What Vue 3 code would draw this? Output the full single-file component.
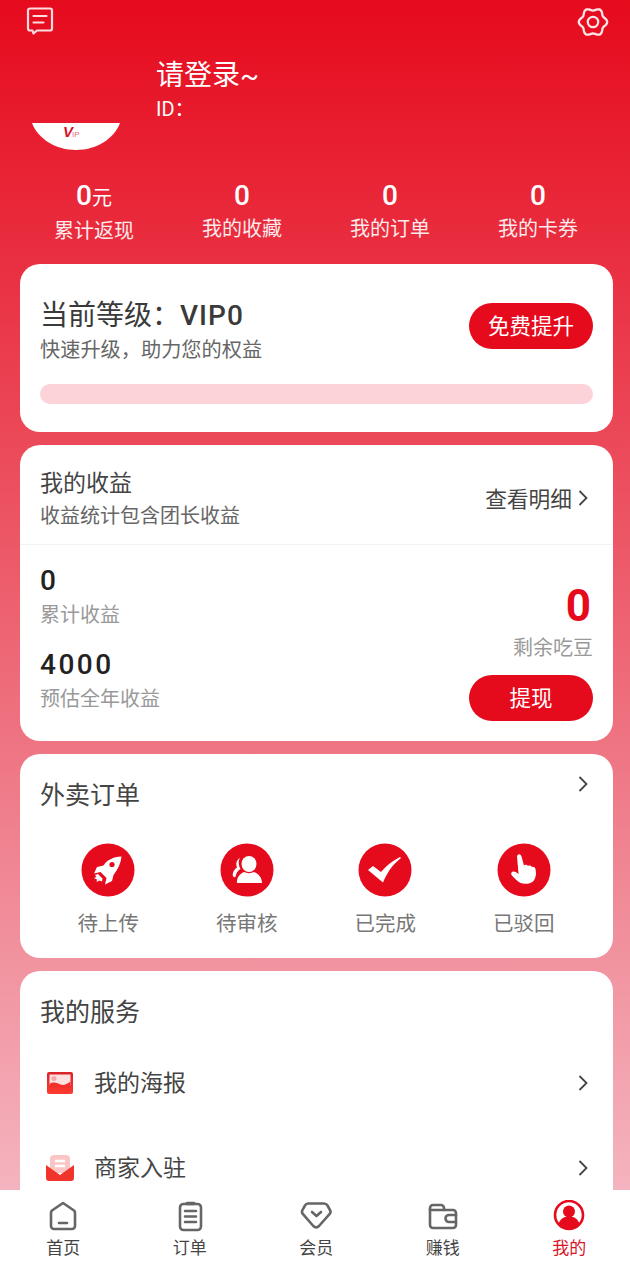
<script setup>
const stats = [
  { num: "0", unit: "元", label: "累计返现" },
  { num: "0", unit: "", label: "我的收藏" },
  { num: "0", unit: "", label: "我的订单" },
  { num: "0", unit: "", label: "我的卡券" },
];
const orders = [
  { key: "rocket", label: "待上传" },
  { key: "user", label: "待审核" },
  { key: "check", label: "已完成" },
  { key: "hand", label: "已驳回" },
];
const tabs = [
  { key: "home", label: "首页" },
  { key: "order", label: "订单" },
  { key: "vip", label: "会员" },
  { key: "wallet", label: "赚钱" },
  { key: "mine", label: "我的" },
];

// 设置图标的花瓣轮廓
function gearPath() {
  const pts = [];
  for (let i = 0; i < 72; i++) {
    const a = (i / 72) * Math.PI * 2;
    const r = 12.8 + 1.4 * Math.cos(6 * a);
    pts.push((16 + r * Math.cos(a)).toFixed(2) + " " + (16 + r * Math.sin(a)).toFixed(2));
  }
  return "M" + pts.join("L") + "z";
}
const gear = gearPath();
</script>

<template>
  <div class="page">
    <div class="topbar">
      <svg width="30" height="30" viewBox="0 0 30 30" fill="none" stroke="#fbdde0" stroke-width="2.200">
        <path d="M5 2.500h20a2 2 0 0 1 2 2v18a2 2 0 0 1-2 2H12l-3.500 3-1-3H5a2 2 0 0 1-2-2v-18a2 2 0 0 1 2-2z" stroke-linejoin="round" />
        <path d="M8.500 10h13M8.500 16.500h10" stroke-linecap="round" />
      </svg>
      <svg width="32" height="32" viewBox="0 0 32 32" fill="none" stroke="#fde6e8" stroke-width="2.300">
        <path :d="gear" stroke-linejoin="round" />
        <circle cx="16" cy="16" r="5.200" />
      </svg>
    </div>

    <div class="profile">
      <div class="avatar">
        <svg width="90" height="29" viewBox="0 0 90 29">
          <path d="M0 1h88C82 17 64 28 44 28S6 17 0 1z" fill="#fff" />
          <text x="31" y="15" class="logo-v">V</text>
          <text x="40" y="15" class="logo-ip">IP</text>
        </svg>
      </div>
      <div class="who">
        <div class="name">请登录~</div>
        <div class="uid">ID：</div>
      </div>
    </div>

    <div class="stats">
      <div v-for="s in stats" :key="s.label" class="stat">
        <div class="stat-num">{{ s.num }}<span v-if="s.unit" class="stat-unit">{{ s.unit }}</span></div>
        <div class="stat-label">{{ s.label }}</div>
      </div>
    </div>

    <section class="card level">
      <div class="level-top">
        <div>
          <div class="level-title">当前等级：<span class="vip">VIP0</span></div>
          <div class="level-sub">快速升级，助力您的权益</div>
        </div>
        <button class="btn">免费提升</button>
      </div>
      <div class="progress"></div>
    </section>

    <section class="card income">
      <div class="income-head">
        <div>
          <div class="income-title">我的收益</div>
          <div class="income-sub">收益统计包含团长收益</div>
        </div>
        <div class="detail">
          查看明细
          <svg class="chev" width="10" height="18" viewBox="0 0 10 18" fill="none" stroke="#444" stroke-width="1.800"><path d="M1.500 2l7 7-7 7" /></svg>
        </div>
      </div>
      <div class="income-body">
        <div class="income-left">
          <div class="amount">0</div>
          <div class="amount-label">累计收益</div>
          <div class="amount second">4000</div>
          <div class="amount-label">预估全年收益</div>
        </div>
        <div class="income-right">
          <div class="remain">0</div>
          <div class="remain-label">剩余吃豆</div>
          <button class="btn">提现</button>
        </div>
      </div>
    </section>

    <section class="card takeout">
      <div class="takeout-head">
        <div class="card-title">外卖订单</div>
        <svg class="chev takeout-chev" width="10" height="18" viewBox="0 0 10 18" fill="none" stroke="#444" stroke-width="1.800"><path d="M1.500 2l7 7-7 7" /></svg>
      </div>
      <div class="order-row">
        <div v-for="o in orders" :key="o.key" class="order">
          <svg width="54" height="54" viewBox="0 0 54 54">
            <circle cx="27" cy="27" r="26.500" fill="#e60a1d" />
            <g v-if="o.key === 'rocket'" fill="#fff">
              <path d="M40.500 13.500C32 14 26 17 22.500 22.500L16 24l-3 6.500 6.500-1.500 6 6-1.500 6.500 7-3.500 1.500-6C37 26 40 20 40.500 13.500z" />
              <circle cx="31" cy="21.500" r="2.600" fill="#e60a1d" />
              <path d="M17 31l-3 1 1.500 2-2.500 1 3 1.500-.5 2.500 3-1.500 2.500 1 .5-3z" />
            </g>
            <g v-else-if="o.key === 'user'" fill="#fff">
              <path d="M20 15c-2 3-1.500 7 .5 11-2.500 1.500-4.500 4-5 8-1.500.5-3-.5-2.800-2.500.3-3 2-5.500 4.300-7-1.500-4-.5-7.500 3-9.500z" />
              <ellipse cx="29" cy="21" rx="7.500" ry="8" />
              <path d="M17 40c-.5-5 2.500-9 7-11 3 1.500 7 1.500 10 0 5 2 8 6 8 11z" />
            </g>
            <path v-else-if="o.key === 'check'" d="M10 27l5-4 8 6c5-6 11-11 19-15l1 1C34 22 29 30 25 39.500z" fill="#fff" />
            <path v-else d="M20 13c1.500-2.500 3.500-2 4.500.5l2.500 9c1-1 3-1 4 .5 1.300-.8 3-.5 3.800 1 1.500-.5 3.200.5 3.700 2 1 4 .5 9-2 12-3 3-9 3.500-13 2-3-1.500-6.500-5-9-8-1-1.500 0-3.500 2-3.500 1.500 0 3 .8 5 2.500z" fill="#fff" />
          </svg>
          <div class="order-label">{{ o.label }}</div>
        </div>
      </div>
    </section>

    <section class="card services">
      <div class="card-title">我的服务</div>
      <div class="service first">
        <svg class="service-icon" width="28" height="24" viewBox="0 0 28 24">
          <defs>
            <linearGradient id="posterFill" x1="0" y1="0" x2="0" y2="1">
              <stop offset="0" stop-color="#d9232a" />
              <stop offset="1" stop-color="#ff3b30" />
            </linearGradient>
          </defs>
          <rect x="1" y="1" width="26" height="22" rx="2" fill="url(#posterFill)" />
          <rect x="3.500" y="3.500" width="21" height="11" fill="#fde0e0" />
          <circle cx="8" cy="7.500" r="2.500" fill="#f7a8ae" />
          <path d="M3.500 13c4-3 8-1 11 .5 3 1 6 0 10-3v6h-21z" fill="#f0302c" />
        </svg>
        <span class="service-name">我的海报</span>
        <svg class="chev" width="10" height="18" viewBox="0 0 10 18" fill="none" stroke="#444" stroke-width="1.800"><path d="M1.500 2l7 7-7 7" /></svg>
      </div>
      <div class="service">
        <svg class="service-icon" width="28" height="26" viewBox="0 0 28 26">
          <rect x="4" y="0" width="20" height="18" rx="4" fill="#fbc5c5" />
          <path d="M9 6h10M9 11h10" stroke="#fff" stroke-width="2.400" />
          <path d="M0 10l14 10 14-10v13a3 3 0 0 1-3 3H3a3 3 0 0 1-3-3z" fill="#f0342c" />
        </svg>
        <span class="service-name">商家入驻</span>
        <svg class="chev" width="10" height="18" viewBox="0 0 10 18" fill="none" stroke="#444" stroke-width="1.800"><path d="M1.500 2l7 7-7 7" /></svg>
      </div>
    </section>

    <nav class="tabbar">
      <div v-for="t in tabs" :key="t.key" class="tab" :class="{ active: t.key === 'mine' }">
        <svg width="32" height="32" viewBox="0 0 32 32" fill="none" stroke="#666" stroke-width="2.600" stroke-linejoin="round" stroke-linecap="round">
          <template v-if="t.key === 'home'">
            <path d="M16 3l11 7.500a3 3 0 0 1 1 2.500v13a3 3 0 0 1-3 3H7a3 3 0 0 1-3-3V13a3 3 0 0 1 1-2.500z" />
            <path d="M12 23h8" />
          </template>
          <template v-else-if="t.key === 'order'">
            <rect x="6" y="4" width="21" height="26" rx="3.500" />
            <path d="M11 11h11M11 16.500h11M11 22h11" />
            <path d="M13 3.500h7" stroke-width="3.500" />
          </template>
          <template v-else-if="t.key === 'vip'">
            <path d="M8 3.500h16c1.500 0 2.800.8 3.500 2l2.500 4.500c.8 1.500.6 3-.5 4.200L19 26c-1.700 1.800-4 1.800-5.700 0L3 14.200c-1.100-1.200-1.300-2.700-.5-4.200L5 5.500c.7-1.200 1.500-2 3-2z" />
            <path d="M12 12l4.500 4 4.500-4" />
          </template>
          <template v-else-if="t.key === 'wallet'">
            <path d="M3 8a3 3 0 0 1 3-3h8a3 3 0 0 1 3 3v2h9a3 3 0 0 1 3 3v12a3 3 0 0 1-3 3H6a3 3 0 0 1-3-3z" />
            <path d="M29 15h-7a3.500 3.500 0 0 0 0 7h7" />
            <path d="M3 10h14" />
          </template>
          <template v-else>
            <circle cx="16" cy="15" r="14" stroke="#e60a1d" />
            <circle cx="16" cy="11.500" r="6" fill="#e60a1d" stroke="none" />
            <path d="M5.500 24c1.500-5 5-7.500 10.500-7.500s9 2.500 10.500 7.500c-3 3-6.500 4.500-10.500 4.500S8.500 27 5.500 24z" fill="#e60a1d" stroke="none" />
          </template>
        </svg>
        <span class="tab-label">{{ t.label }}</span>
      </div>
    </nav>
  </div>
</template>

<style scoped>
.page {
  position: relative;
  width: 630px;
  height: 1280px;
  overflow: hidden;
  background: linear-gradient(180deg, #e60a1d 0, #f4b4bf 1190px);
  font-family: "Roboto", "Noto Sans CJK SC", sans-serif;
  color: #333;
  box-sizing: border-box;
}

.topbar {
  display: flex;
  justify-content: space-between;
  padding: 6px 21px 0 25px;
  height: 46px;
  box-sizing: border-box;
}

.profile {
  display: flex;
  height: 122px;
}

.avatar {
  width: 156px;
  padding: 76px 0 0 32px;
  box-sizing: border-box;
}

.logo-v {
  font-family: "Liberation Sans", sans-serif;
  font-size: 15px;
  font-weight: 700;
  font-style: italic;
  fill: #d8112a;
}

.logo-ip {
  font-family: "Liberation Sans", sans-serif;
  font-size: 8px;
  fill: #e8707e;
}

.name {
  margin-top: 10px;
  font-size: 28px;
  line-height: 40px;
  color: #fff;
}

.uid {
  margin-top: -2px;
  font-size: 20px;
  line-height: 30px;
  color: #fff;
}

.stats {
  display: grid;
  grid-template-columns: repeat(4, 148px);
  padding: 0 20px;
  height: 96px;
  color: #fff;
  text-align: center;
}

.stat-num {
  font-size: 28px;
  line-height: 36px;
  font-weight: 500;
  margin-top: 10px;
}

.stat-unit {
  font-size: 20px;
  font-weight: 400;
}

.stat-label {
  font-size: 20px;
  line-height: 30px;
  color: #fdeaec;
}

.card {
  margin: 0 17px 13px 20px;
  background: #fff;
  border-radius: 20px;
}

.level {
  height: 168px;
  padding: 32px 20px 0;
  box-sizing: border-box;
}

.level-top {
  display: flex;
  justify-content: space-between;
  align-items: flex-start;
}

.level-title {
  font-size: 28px;
  line-height: 40px;
  color: #3a3a3a;
}

.vip {
  font-weight: 500;
  letter-spacing: 1px;
}

.level-sub {
  font-size: 20.200px;
  line-height: 29px;
  color: #666;
}

.btn {
  width: 124px;
  height: 46px;
  margin-top: 7px;
  border: 0;
  padding: 0 0 4px;
  border-radius: 23px;
  background: #e60a1d;
  color: #fff;
  font-family: inherit;
  font-size: 21.500px;
}

.progress {
  height: 20px;
  margin-top: 19px;
  border-radius: 10px;
  background: #fcd3d8;
}

.income {
  height: 296px;
}

.income-head {
  display: flex;
  justify-content: space-between;
  align-items: center;
  height: 100px;
  padding: 6px 25px 0 20px;
  border-bottom: 1px solid #f2f2f2;
  box-sizing: border-box;
}

.income-title {
  font-size: 23px;
  line-height: 36px;
  color: #444;
}

.income-sub {
  font-size: 20px;
  line-height: 28px;
  color: #666;
}

.detail {
  display: flex;
  align-items: center;
  gap: 6px;
  font-size: 21.700px;
  color: #444;
}

.income-body {
  display: flex;
  justify-content: space-between;
  padding: 18px 20px 0;
}

.amount {
  font-size: 28px;
  line-height: 36px;
  color: #222;
  letter-spacing: 2.500px;
  font-weight: 500;
}

.amount.second {
  margin-top: 16px;
}

.amount-label {
  font-size: 20px;
  line-height: 32px;
  color: #999;
}

.income-right {
  display: flex;
  flex-direction: column;
  align-items: flex-end;
  padding-top: 16px;
}

.remain {
  padding-right: 2px;
  font-size: 44px;
  line-height: 54px;
  font-weight: 700;
  color: #e60a1d;
}

.remain-label {
  margin-top: -2px;
  font-size: 20px;
  line-height: 34px;
  color: #999;
}

.income-right .btn {
  margin-top: 10px;
}

.takeout {
  height: 204px;
  padding: 21px 20px 0;
  box-sizing: border-box;
}

.takeout-head {
  display: flex;
  justify-content: space-between;
  align-items: flex-start;
  padding-right: 5px;
}

.card-title {
  font-size: 25px;
  line-height: 42px;
  color: #444;
}

.services .card-title {
  margin-top: 1px;
}

.order-row {
  display: grid;
  grid-template-columns: repeat(4, 138.500px);
  margin: 26px 0 0 -1px;
}

.order {
  display: flex;
  flex-direction: column;
  align-items: center;
}

.order-label {
  margin-top: 12px;
  font-size: 20.500px;
  line-height: 30px;
  color: #777;
}

.services {
  height: 330px;
  padding: 20px 20px 0;
  box-sizing: border-box;
}

.service {
  display: flex;
  align-items: center;
  height: 85px;
  padding-right: 5px;
}

.service.first {
  margin-top: 6px;
}

.service-icon {
  margin: 0 20px 0 6px;
}

.service-name {
  flex: 1;
  margin-bottom: 4px;
  font-size: 23px;
  color: #444;
}

.tabbar {
  position: absolute;
  left: 0;
  right: 0;
  top: 1190px;
  height: 90px;
  display: grid;
  grid-template-columns: repeat(5, 126.500px);
  background: #fff;
}

.tab {
  display: flex;
  flex-direction: column;
  align-items: center;
  padding-top: 10px;
}

.tab-label {
  margin-top: 3px;
  font-size: 17px;
  line-height: 26px;
  color: #444;
}

.tab.active .tab-label {
  color: #d8162a;
}
</style>

<style>
body {
  background: #fff;
}
</style>
